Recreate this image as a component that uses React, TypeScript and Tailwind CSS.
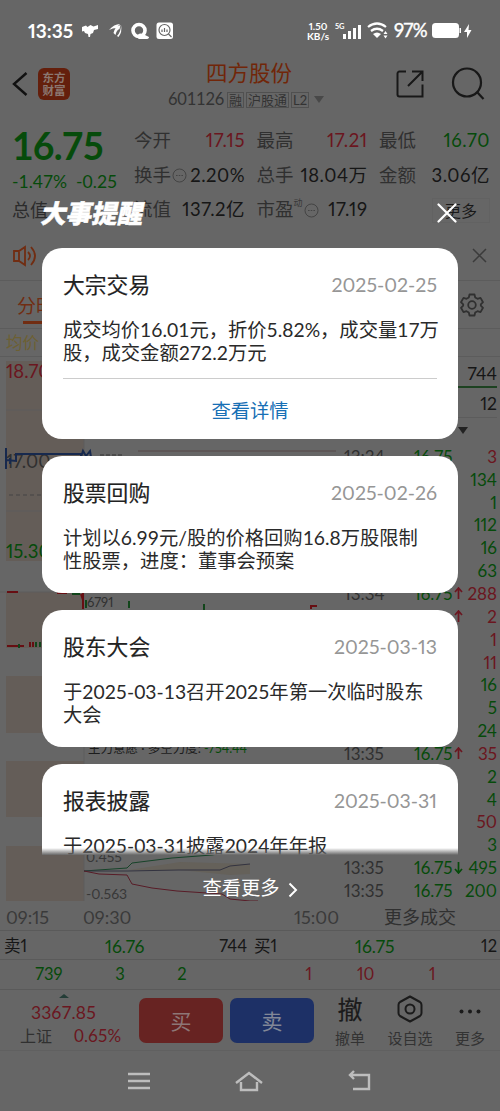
import type { ReactNode } from 'react'
import clsx from 'clsx'

type Tone = 'up' | 'down' | 'plain'

const tones: Record<Tone, string> = {
    up: 'text-[#6b1620]',
    down: 'text-[#064b0b]',
    plain: 'text-[#161616]',
}

const quoteRows: { label: string; value: string; tone: Tone; dot?: boolean; mark?: string }[][] = [
    [
        { label: '今开', value: '17.15', tone: 'up' },
        { label: '最高', value: '17.21', tone: 'up' },
        { label: '最低', value: '16.70', tone: 'down' },
    ],
    [
        { label: '换手', value: '2.20%', tone: 'plain', dot: true },
        { label: '总手', value: '18.04万', tone: 'plain' },
        { label: '金额', value: '3.06亿', tone: 'plain' },
    ],
    [
        { label: '流值', value: '137.2亿', tone: 'plain' },
        { label: '市盈', value: '17.19', tone: 'plain', dot: true, mark: '动' },
    ],
]

// time and price are left out while a card covers the row
const trades: { time?: string; price?: string; arrow?: 'up' | 'down'; volume: string; tone: Tone }[] = [
    { time: '13:34', price: '16.75', volume: '3', tone: 'up' },
    { volume: '134', tone: 'down' },
    { volume: '1', tone: 'down' },
    { volume: '112', tone: 'down' },
    { volume: '16', tone: 'down' },
    { volume: '63', tone: 'down' },
    { time: '13:34', price: '16.75', arrow: 'up', volume: '288', tone: 'up' },
    { arrow: 'up', volume: '2', tone: 'up' },
    { volume: '1', tone: 'up' },
    { volume: '11', tone: 'up' },
    { volume: '16', tone: 'down' },
    { volume: '5', tone: 'down' },
    { volume: '24', tone: 'down' },
    { time: '13:35', price: '16.75', arrow: 'up', volume: '35', tone: 'up' },
    { volume: '2', tone: 'down' },
    { volume: '4', tone: 'down' },
    { volume: '50', tone: 'up' },
    { volume: '3', tone: 'down' },
    { time: '13:35', price: '16.75', arrow: 'down', volume: '495', tone: 'down' },
    { time: '13:35', price: '16.75', volume: '200', tone: 'down' },
]

const events: { title: string; date: string; lines: string[]; link?: string }[] = [
    { title: '大宗交易', date: '2025-02-25', lines: ['成交均价16.01元，折价5.82%，成交量17万', '股，成交金额272.2万元'], link: '查看详情' },
    { title: '股票回购', date: '2025-02-26', lines: ['计划以6.99元/股的价格回购16.8万股限制', '性股票，进度：董事会预案'] },
    { title: '股东大会', date: '2025-03-13', lines: ['于2025-03-13召开2025年第一次临时股东', '大会'] },
    { title: '报表披露', date: '2025-03-31', lines: ['于2025-03-31披露2024年年报'] },
]

function StatusBar() {
    return (
        <div className="flex h-[62px] shrink-0 items-center pl-7 pr-7 text-white">
            <span className="w-[47px] text-[19px] font-bold">13:35</span>
            <svg className="ml-[7px]" width="92" height="18" viewBox="0 0 92 18" fill="currentColor">
                <path d="M0 5l4-1.500 1.500 1.500 3-2 3 1.500L16 3v4l-4 1-1 3-2.500 1-.5 3h-1.500l-.5-3-3-1-1-2-2 .5z" />
                <path d="M27 8q5-6 11-6l-4 4q-3 0-7 2zM31.500 11q1-6 7-8l-1 4q-3 1-4 6zM35 14q4-4 4-11 1.500 7-2.500 12z" />
                <circle cx="57" cy="8.500" r="6" fill="none" stroke="currentColor" strokeWidth="3.600" />
                <path d="M55 15.500q1-5.500 6-3.500l6 3q0 2-3 2h-7z" />
                <rect x="74.500" y="0.500" width="16.500" height="16.500" rx="2.500" />
                <g fill="none" stroke="#666" strokeWidth="1.200">
                    <circle cx="82.500" cy="8" r="5.500" />
                    <path d="M86.500 12l3 3M80 7.500v2.500M82.500 6v4M85 7.500v2.500" />
                </g>
            </svg>
            <div className="ml-auto text-center text-[10px] font-bold leading-[10.500px]">
                <div>1.50</div>
                <div>KB/s</div>
            </div>
            <svg className="ml-[6px]" width="54" height="18" viewBox="0 0 54 18" fill="currentColor">
                <text x="0" y="7" fontSize="7.500" fontWeight="700">5G</text>
                <path d="M8 12h3v5H8zM13 9h3v8h-3zM18 6h3v11h-3zM23 3h3v14h-3z" />
                <g fill="none" stroke="currentColor" strokeWidth="2.200">
                    <path d="M33 5q9-7 18 0M36 9q6-4.500 12 0" />
                </g>
                <path d="M38 12q4-3 8 0l-4 4zM48.500 12l2-3 2 3zM48.500 13.500h4l-2 3z" />
            </svg>
            <span className="ml-[5px] text-[18.500px] tracking-[-0.600px] [-webkit-text-stroke:0.400px_white]">97%</span>
            <svg className="ml-[5px]" width="40" height="16" viewBox="0 0 40 16" fill="currentColor">
                <rect width="27" height="15" rx="3.500" />
                <path d="M27.500 5h1.500v5h-1.500zM37 1l-5 8h3v6l4.500-8h-3z" />
            </svg>
        </div>
    )
}

function Header() {
    return (
        <header className="flex h-[58px] items-center">
            <svg className="ml-3" width="16" height="28" viewBox="0 0 16 28" fill="none" stroke="#111" strokeWidth="2.400">
                <path d="M14.500 3L2 14l12.500 11" />
            </svg>
            <div className="ml-[10px] flex h-[32px] w-[32px] flex-col items-center justify-center rounded-[6px] bg-[#641f0c] text-[11.500px] font-bold leading-[13px] text-[#8b7770]">
                <span>东方</span>
                <span>财富</span>
            </div>
            <div className="ml-[98px] w-[162px] pt-[5px]">
                <div className="pl-[38px] text-[21.500px] leading-[26px] text-[#712609]">四方股份</div>
                <div className="flex items-center gap-[2px] text-[13px] leading-[27px] text-[#333]">
                    <span className="mr-[2px] w-[55px] text-[16.500px] tabular-nums tracking-[-0.200px]">601126</span>
                    <span className="border border-[#505050] px-px leading-[14px]">融</span>
                    <span className="whitespace-nowrap border border-[#505050] px-px leading-[14px]">沪股通</span>
                    <span className="border border-[#505050] px-px leading-[14px]">L2</span>
                    <span className="ml-[3px] border-x-[5px] border-t-[7px] border-x-transparent border-t-[#484848]" />
                </div>
            </div>
            <svg className="ml-[65px]" width="30" height="30" viewBox="0 0 30 30" fill="none" stroke="#181818" strokeWidth="2">
                <path d="M11 2.500H4.500a2 2 0 0 0-2 2v21a2 2 0 0 0 2 2h23v-12M17 2.500h10.500V12M27 3L13 17" />
            </svg>
            <svg className="ml-[26px] shrink-0" width="35" height="34" viewBox="0 0 35 34" fill="none" stroke="#181818" strokeWidth="2.200">
                <circle cx="16" cy="15.500" r="14" />
                <path d="M26 25l6.500 7" />
            </svg>
        </header>
    )
}

function Dots() {
    return (
        <svg className="mx-px shrink-0" width="15" height="15" viewBox="0 0 15 15" fill="none" stroke="#444">
            <circle cx="7.500" cy="7.500" r="6.500" />
            <path d="M4 7.500h7" strokeDasharray="1.600 1.100" />
        </svg>
    )
}

function Quote() {
    return (
        <section className="flex h-[114px] pl-3 pr-[10px]">
            <div className="w-[122px] whitespace-nowrap text-[#064b0b]">
                <div className="h-[49px] text-[37.500px] font-bold tabular-nums leading-[51px] tracking-[-0.900px]">16.75</div>
                <div className="flex gap-[9px] text-[17.500px] tabular-nums leading-[25px]"><span>-1.47%</span><span>-0.25</span></div>
                <div className="mt-px text-[18px] leading-[30px] text-[#2b2b2b]">总值</div>
            </div>
            <div className="flex-1 pt-[4px]">
                {quoteRows.map((row, index) => (
                    <div key={index} className="grid h-[34.500px] grid-cols-[111px_111px_111px] items-center gap-[11.500px]">
                        {row.map((item) => (
                            <div key={item.label} className="flex items-center whitespace-nowrap">
                                <span className="text-[18.500px] text-[#303030]">{item.label}</span>
                                {item.mark && <span className="-mt-4 text-[9px] text-[#383838]">{item.mark}</span>}
                                {item.dot && <Dots />}
                                <span className={clsx('ml-auto text-[18.500px] tracking-[0.500px]', tones[item.tone])}>{item.value}</span>
                            </div>
                        ))}
                        {row.length === 2 && (
                            <div className="ml-auto w-[58px] border border-[#626262] text-center text-[16px] leading-[23px] text-[#191919]">更多</div>
                        )}
                    </div>
                ))}
            </div>
        </section>
    )
}

function NoticeAndTabs() {
    return (
        <>
            <div className="flex h-[47px] items-center justify-between border-b border-[#5c5c5c] pb-[3px] pl-[13px] pr-[12px]">
                <svg width="25" height="22" viewBox="0 0 25 22" fill="none" stroke="#712d12" strokeWidth="1.800">
                    <path d="M1 6h5l6-4v18l-6-4H1zM6 6v10M15 7q4 4 0 8M18 2q8 9 0 18" />
                </svg>
                <svg width="17" height="17" viewBox="0 0 17 17" stroke="#3b3b3b" strokeWidth="1.500">
                    <path d="M2 2l13 13M15 2L2 15" />
                </svg>
            </div>
            <div className="flex h-[48px] items-center justify-between border-b border-[#5c5c5c] pl-[17px] pr-[16px]">
                <div className="relative pt-[3px] text-[19px] text-[#712d12]">
                    分时
                    <span className="absolute -bottom-[4px] left-[6px] h-[3px] w-[26px] bg-[#712d12]" />
                </div>
                <svg width="24" height="24" viewBox="0 0 24 24" fill="none" stroke="#303030" strokeWidth="1.800" strokeLinejoin="round">
                    <path d="M9.500 1.500h5l.7 3 2.300 1.300 3-.9 2.500 4.300-2.200 2.200v1.200l2.200 2.200-2.500 4.300-3-.9-2.300 1.300-.7 3h-5l-.7-3-2.300-1.300-3 .9L1 14.800l2.200-2.200v-1.200L1 9.200l2.500-4.300 3 .9 2.300-1.300z" />
                    <circle cx="12" cy="12" r="3.800" />
                </svg>
            </div>
            <div className="h-[28px] border-b border-[#5c5c5c] pl-[6px] text-[16.500px] leading-[28px] text-[#6d6032]">均价</div>
        </>
    )
}

function Chart() {
    return (
        <svg width="340" height="544" viewBox="0 357 340 544" fill="none">
            <g fill="#645d58">
                <path d="M6 361h78v200H6zM6 592h78v56H6zM6 676h78v57H6zM6 761h78v56H6zM6 846h78v56H6z" />
            </g>
            <path d="M6 410h334M6 511h334M0 592h340M84 361v540" stroke="#5c5c5c" />
            <path d="M9 495h330" stroke="#444" strokeDasharray="4 3" />
            <g fontSize="18.500">
                <text x="6" y="378" fill="#6b1620">18.70</text>
                <text x="6" y="468" fill="#303030">17.00</text>
                <text x="6" y="558" fill="#064b0b">15.30</text>
            </g>
            <path d="M6 448v21M6 460l10 1v-7h65v4M10 458v6" stroke="#17294e" strokeWidth="2" />
            <path d="M81 457l2-6 3 5 4-5 1 6" stroke="#17294e" strokeWidth="2" />
            <path d="M100 455h22" stroke="#333" strokeDasharray="4 2" />
            <path d="M138 451h198" stroke="#554747" />
            <path d="M7 592h11M57 593h10M81 594l2 6" stroke="#670e12" strokeWidth="2" />
            <path d="M7 646h17M30 642v5M33 642v5" stroke="#670e12" strokeWidth="2" />
            <path d="M19 644v4M36 642v5M40 642v5M72 594h8M86 600v8M129 601v7M204 604v6" stroke="#11451a" strokeWidth="2" />
            <path d="M83 593v16M311 609v-3h6" stroke="#670e12" strokeWidth="2" />
            <text x="87" y="607" fontSize="13" fill="#303030">6791</text>
            <text x="88" y="753" fontSize="12.500" fill="#1c1c1c">主力意愿 · 多空力度: <tspan fill="#064b0b">-754.44</tspan></text>
            <path d="M129 870l51-8 70 2v10l-20 1-50-5z" fill="#65615a" />
            <path d="M84 871l43-3 5-5 40-5 40-3 38-7" stroke="#174329" />
            <path d="M84 871h44l50-1h42l10-4 20-2" stroke="#333340" />
            <path d="M84 871l15 3 28 1 5 9 20 4 25 3 45 3 8 5 20 2h8" stroke="#581c27" />
            <g fontSize="14" fill="#383838">
                <text x="86" y="862">0.455</text>
                <text x="86" y="899">-0.563</text>
            </g>
        </svg>
    )
}

function Arrow({ up }: { up: boolean }) {
    return (
        <svg className={clsx(up ? 'text-[#6b1620]' : 'rotate-180 text-[#064b0b]')} width="9" height="12" viewBox="0 0 9 12" fill="none" stroke="currentColor" strokeWidth="1.700">
            <path d="M4.500 12V1M1 5l3.500-4L8 5" />
        </svg>
    )
}

function Trades() {
    return (
        <aside className="w-[160px] pr-[3px] text-[17.500px]">
            <div className="flex h-[31px] items-center justify-end border-b-2 border-[#1d4221] pt-[6px] text-[#161616]">744</div>
            <div className="flex h-[30px] items-center justify-end border-b border-[#5c5c5c] pt-[3px] text-[#161616]">12</div>
            <div className="flex h-[27px] items-center justify-end pb-[3px] pr-[29px]">
                <span className="border-x-[5px] border-t-[7px] border-x-transparent border-t-[#222]" />
            </div>
            <div className="text-[17px]">
                {trades.map((trade, index) => (
                    <div key={index} className="grid h-[22.850px] grid-cols-[70px_40px_10px_1fr] items-center pl-1 leading-none">
                        <span className="text-[#303030]">{trade.time}</span>
                        <span className="text-[#064b0b]">{trade.price}</span>
                        <span>{trade.arrow && <Arrow up={trade.arrow === 'up'} />}</span>
                        <span className={clsx('text-right', tones[trade.tone])}>{trade.volume}</span>
                    </div>
                ))}
            </div>
        </aside>
    )
}

function OrderBook() {
    const sides = [
        { name: '卖1', price: '16.76', amount: '744' },
        { name: '买1', price: '16.75', amount: '12' },
    ]
    return (
        <>
            <div className="grid h-[29px] grid-cols-2 border-b border-[#5a5a5a] text-[16.500px] leading-[31px] text-[#161616]">
                {sides.map((side) => (
                    <div key={side.name} className="flex pl-1 pr-[3px]">
                        <span className="w-[101px]">{side.name}</span>
                        <span className="text-[17.500px] text-[#064b0b]">{side.price}</span>
                        <span className="ml-auto">{side.amount}</span>
                    </div>
                ))}
            </div>
            <div className="grid h-[30px] grid-cols-[98px_44px_80px_90px_114px_1fr] border-b border-[#5a5a5a] text-[16.500px] leading-[28px]">
                <span className="text-center text-[#064b0b]">739</span>
                <span className="text-center text-[#064b0b]">3</span>
                <span className="text-center text-[#064b0b]">2</span>
                <span className="text-right text-[#6b1620]">1</span>
                <span className="pl-[45px] text-[#6b1620]">10</span>
                <span className="pl-[3px] text-[#6b1620]">1</span>
            </div>
        </>
    )
}

function Tool({ icon, label, className }: { icon: ReactNode; label: string; className: string }) {
    return (
        <div className={clsx('flex flex-col items-center text-[15px] leading-[20px] text-[#333]', className)}>
            <div className="flex h-[38px] items-center">{icon}</div>
            <span>{label}</span>
        </div>
    )
}

function TradeBar() {
    return (
        <footer className="flex h-[61px] border-b border-[#606060]">
            <div className="w-[139px] pl-5 text-[17px] tabular-nums text-[#6b1620]">
                <div className="ml-[39px] mt-[4px] w-[10px] border-x-[5px] border-b-[4px] border-x-transparent border-b-[#243d37]" />
                <div className="ml-[11px] mt-[3px] text-[17.500px] leading-[24px]">3367.85</div>
                <div className="flex gap-[22px] leading-[22px]"><span className="text-[16px] text-[#303030]">上证</span><span>0.65%</span></div>
            </div>
            <button className="mt-[8px] h-[45px] w-[84px] rounded-[7px] bg-[#672322] text-[21px] text-[#8d7676]">买</button>
            <button className="ml-[7px] mt-[8px] h-[45px] w-[84px] rounded-[7px] bg-[#1d3066] text-[21px] text-[#818797]">卖</button>
            <Tool className="ml-[15px] w-[42px]" icon={<span className="text-[25px] text-[#1b1b1b] [-webkit-text-stroke:0.150px_#1b1b1b]">撤</span>} label="撤单" />
            <Tool
                className="ml-[14px] w-[50px]"
                icon={
                    <svg width="26" height="28" viewBox="0 0 26 28" fill="none" stroke="#1b1b1b" strokeWidth="2" strokeLinejoin="round">
                        <path d="M13 1.500l10 5.500q1.500 1 1.500 3v8q0 2-1.500 3l-10 5.500L3 21q-1.500-1-1.500-3v-8Q1.500 8 3 7z" />
                        <circle cx="13" cy="14" r="4.500" />
                    </svg>
                }
                label="设自选"
            />
            <Tool
                className="ml-[15px] w-[40px]"
                icon={
                    <svg className="mt-1" width="22" height="5" viewBox="0 0 22 5" fill="#1b1b1b">
                        <circle cx="2.500" cy="2.500" r="2" /><circle cx="11" cy="2.500" r="2" /><circle cx="19.500" cy="2.500" r="2" />
                    </svg>
                }
                label="更多"
            />
        </footer>
    )
}

function EventCard({ event }: { event: (typeof events)[number] }) {
    return (
        <article className={clsx('shrink-0 rounded-[20px] bg-white px-[21px] pt-[20px]', event.link ? 'h-[191px]' : 'h-[137px]')}>
            <div className="flex h-[34px] items-center justify-between">
                <h3 className="text-[21.800px] text-[#222] [-webkit-text-stroke:0.150px_#222]">{event.title}</h3>
                <time className="text-[19.500px] text-[#969696]">{event.date}</time>
            </div>
            <div className="mt-[16px] whitespace-nowrap text-[19.300px] tabular-nums leading-[23px] text-[#2a2a2a]">
                {event.lines.map((line) => <p key={line}>{line}</p>)}
            </div>
            {event.link && (
                <div className="mt-[14px] border-t border-[#ccc] text-center text-[19.300px] leading-[64px] text-[#176fb5]">{event.link}</div>
            )}
        </article>
    )
}

function EventReminder() {
    return (
        <div className="absolute inset-0 flex flex-col">
            <StatusBar />
            <div className="mt-[131px] flex h-[40px] shrink-0 items-center justify-between pl-[42px] pr-[43px] text-white">
                <h2 className="-skew-x-12 text-[25.500px] font-black [-webkit-text-stroke:0.500px_white]">大事提醒</h2>
                <svg width="20" height="20" viewBox="0 0 20 20" stroke="currentColor" strokeWidth="2.200" strokeLinecap="round">
                    <path d="M1.500 1.500l17 17M18.500 1.500l-17 17" />
                </svg>
            </div>
            <div className="relative mx-[42px] mt-[15px] flex h-[607px] shrink-0 flex-col gap-[17px] overflow-hidden">
                {events.map((event) => <EventCard key={event.date} event={event} />)}
                <div className="absolute inset-x-0 bottom-0 h-[7px] bg-linear-to-b from-transparent to-[#666]" />
            </div>
            <button className="mt-[18px] flex h-[30px] items-center justify-center gap-[8px] text-[19.300px] text-white">
                查看更多
                <svg className="mt-1" width="10" height="16" viewBox="0 0 10 16" fill="none" stroke="currentColor" strokeWidth="2">
                    <path d="M1.500 1.500L8 8l-6.500 6.500" />
                </svg>
            </button>
        </div>
    )
}

export default function App() {
    return (
        <main className="relative h-[1111px] w-[500px] overflow-hidden bg-[#666] font-['Lato','Noto_Sans_CJK_SC',sans-serif] proportional-nums">
            <div className="h-[55px]" />
            <Header />
            <div className="h-[7px]" />
            <Quote />
            <NoticeAndTabs />
            <div className="flex h-[544px]">
                <Chart />
                <Trades />
            </div>
            <div className="flex h-[30px] items-center border-b border-[#5a5a5a] pl-[6px] pt-[3px] text-[18px] text-[#3a3a3a]">
                <span className="w-[77px]">09:15</span>
                <span>09:30</span>
                <span className="ml-auto mr-[45px]">15:00</span>
                <span className="mr-[44px] text-[#303030]">更多成交</span>
            </div>
            <OrderBook />
            <TradeBar />
            <nav className="flex h-[60px] items-center justify-between px-[128px] text-[#bdbdbd]">
                <svg width="22" height="20" viewBox="0 0 22 20" stroke="currentColor" strokeWidth="2.600"><path d="M0 3h22M0 10h22M0 17h22" /></svg>
                <svg width="28" height="22" viewBox="0 0 28 22" fill="none" stroke="currentColor" strokeWidth="2.400"><path d="M1 13L14 3l13 10M6 12v8h16v-8" /></svg>
                <svg width="24" height="22" viewBox="0 0 24 22" fill="none" stroke="currentColor" strokeWidth="2.400"><path d="M6 1L2 5l4 4M2 5h19v14H5" /></svg>
            </nav>
            <EventReminder />
        </main>
    )
}
